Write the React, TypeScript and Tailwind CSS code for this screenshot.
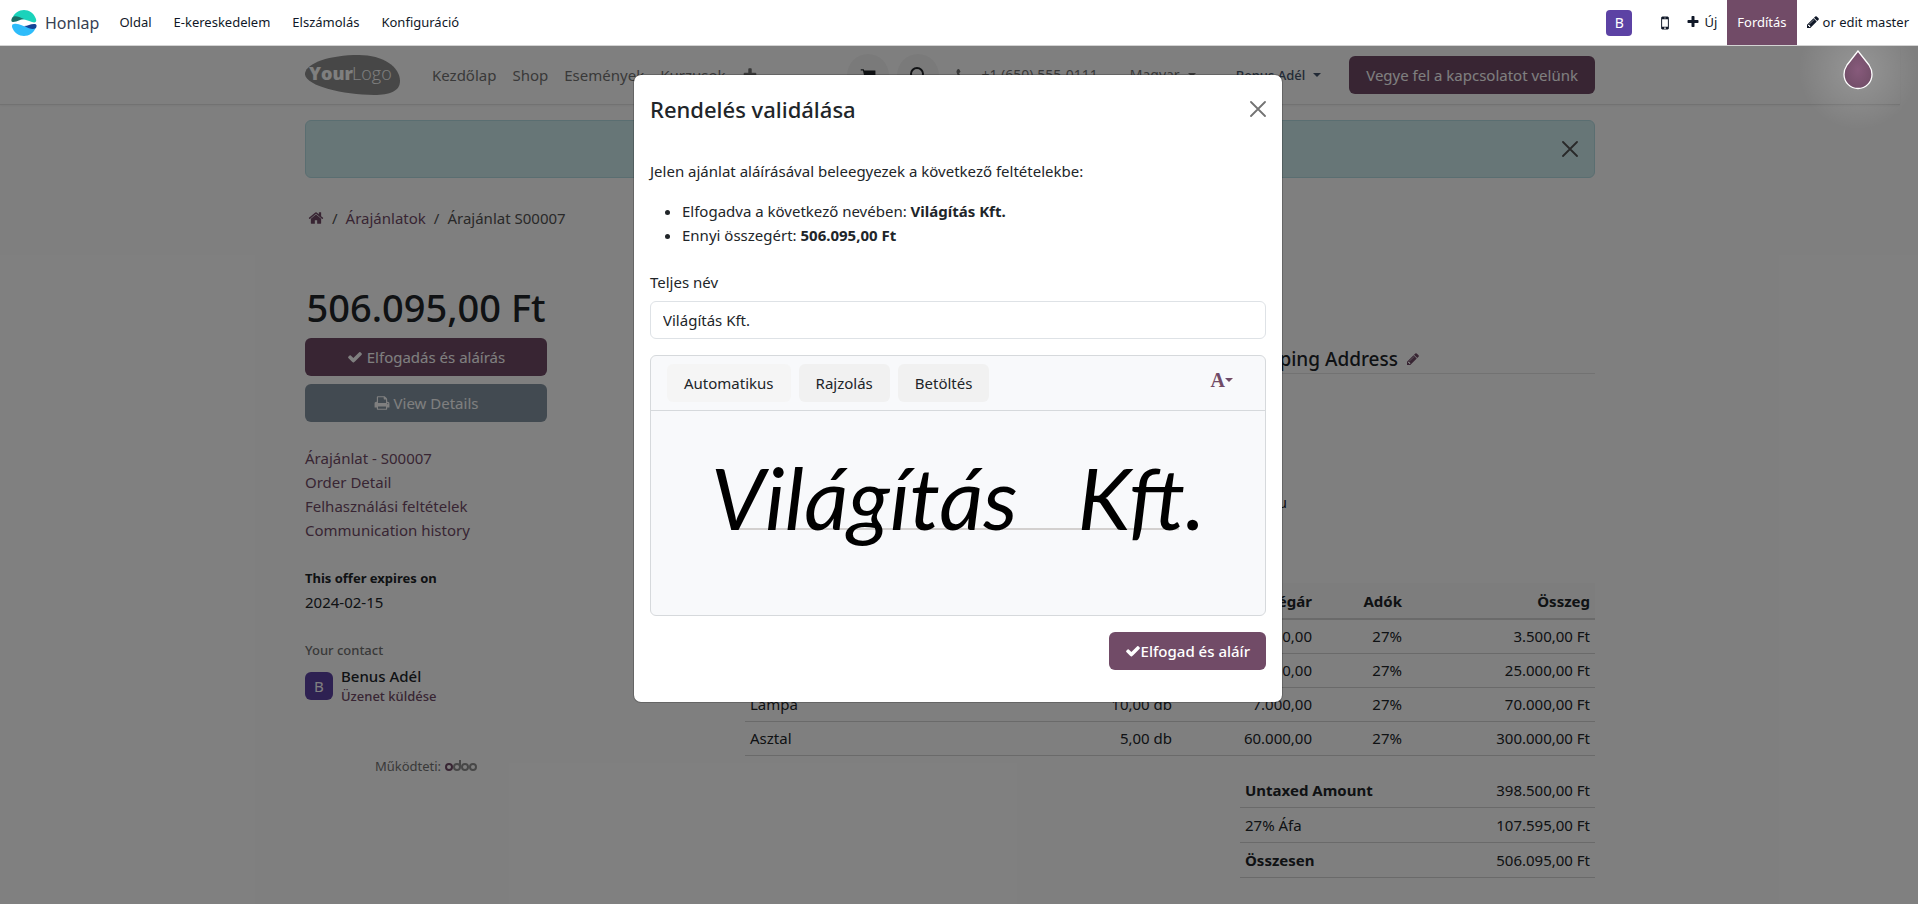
import React from 'react';

const ICONS = {
  check: 'M1671 566q0 40-28 68l-724 724-136 136q-28 28-68 28t-68-28l-136-136-362-362q-28-28-28-68t28-68l136-136q28-28 68-28t68 28l294 295 656-657q28-28 68-28t68 28l136 136q28 28 28 68z',
  pencil: 'M491 1536l91-91-235-235-91 91v107h128v128h107zm523-928q0-22-22-22-10 0-17 7l-542 542q-7 7-7 17 0 22 22 22 10 0 17-7l542-542q7-7 7-17zm-54-192l416 416-832 832h-416v-416zm683 96q0 53-37 90l-166 166-416-416 166-165q36-38 90-38 53 0 91 38l235 234q37 39 37 91z',
  plus: 'M1600 736v192q0 40-28 68t-68 28h-416v416q0 40-28 68t-68 28h-192q-40 0-68-28t-28-68v-416h-416q-40 0-68-28t-28-68v-192q0-40 28-68t68-28h416v-416q0-40 28-68t68-28h192q40 0 68 28t28 68v416h416q40 0 68 28t28 68z',
  print: 'M448 1536h896v-256h-896v256zm0-640h896v-384h-160q-40 0-68-28t-28-68v-160h-640v640zm1152 64q0-26-19-45t-45-19-45 19-19 45 19 45 45 19 45-19 19-45zm128 0v416q0 13-9.5 22.5t-22.5 9.5h-224v160q0 40-28 68t-68 28h-960q-40 0-68-28t-28-68v-160h-224q-13 0-22.5-9.5t-9.5-22.5v-416q0-79 56.5-135.5t135.5-56.5h64v-544q0-40 28-68t68-28h672q40 0 88 20t76 48l152 152q28 28 48 76t20 88v256h64q79 0 135.5 56.5t56.5 135.5z',
  home: 'M1472 992v480q0 26-19 45t-45 19h-384v-384h-256v384h-384q-26 0-45-19t-19-45v-480q0-1 .5-3t.5-3l575-474 575 474q1 2 1 6zm223-69l-62 74q-8 9-21 11h-3q-13 0-21-7l-692-577-692 577q-12 8-24 7-13-2-21-11l-62-74q-8-10-7-23.5t11-21.5l719-599q32-26 76-26t76 26l244 204v-195q0-14 9-23t23-9h192q14 0 23 9t9 23v408l219 182q10 8 11 21.5t-7 23.5z',
  mobile: 'M976 1408q0-33-23.5-56.5t-56.5-23.5-56.5 23.5-23.5 56.5 23.5 56.5 56.5 23.5 56.5-23.5 23.5-56.5zm208-160v-704q0-13-9.5-22.5t-22.5-9.5h-512q-13 0-22.5 9.5t-9.5 22.5v704q0 13 9.5 22.5t22.5 9.5h512q13 0 22.5-9.5t9.5-22.5zm-192-848q0-16-16-16h-160q-16 0-16 16t16 16h160q16 0 16-16zm288-16v1024q0 52-38 90t-90 38h-512q-52 0-90-38t-38-90v-1024q0-52 38-90t90-38h512q52 0 90 38t38 90z',
  cart: 'M704 1536q0 52-38 90t-90 38-90-38-38-90 38-90 90-38 90 38 38 90zm896 0q0 52-38 90t-90 38-90-38-38-90 38-90 90-38 90 38 38 90zm128-1088v512q0 24-16.500 42.500t-40.500 21.500l-1044 122q13 60 13 70 0 16-24 64h920q26 0 45 19t19 45-19 45-45 19h-1024q-26 0-45-19t-19-45q0-11 8-31.500t16-36 21.500-40 15.500-29.500l-177-823h-204q-26 0-45-19t-19-45 19-45 45-19h256q16 0 28.500 6.500t19.500 15.500 13 24.500 8 26 5.500 29.500 4.500 26h1201q26 0 45 19t19 45z',
  phone: 'M1600 1240q0 27-10 70.500t-21 68.500q-21 50-122 106-94 51-186 51-27 0-53-3.500t-57.500-12.500-47-14.500-55.500-20.500-49-18q-98-35-175-83-127-79-264-216t-216-264q-48-77-83-175-3-9-18-49t-20.500-55.500-14.500-47-12.500-57.500-3.500-53q0-92 51-186 56-101 106-122 25-11 68.500-21t70.500-10q14 0 21 3 18 6 53 76 11 19 30 54t35 63.500 31 53.500q3 4 17.500 25t21.500 35.500 7 28.500q0 20-28.500 50t-62 55-62 53-28.500 46q0 9 5 22.500t8.500 20.500 14 24 11.500 19q76 137 174 235t235 174q2 1 19 11.500t24 14 20.500 8.500 22.500 5q18 0 46-28.500t53-62 55-62 50-28.500q14 0 28.500 7t35.500 21.500 25 17.500q25 15 53.500 31t63.500 35 54 30q70 35 76 53 3 7 3 21z',
};

const Icon = ({ name, className = 'size-4' }: { name: keyof typeof ICONS; className?: string }) => (
  <svg viewBox="0 0 1792 1792" fill="currentColor" aria-hidden="true" className={`inline-block shrink-0 ${className}`}>
    <path d={ICONS[name]} />
  </svg>
);

const CloseIcon = () => (
  <svg viewBox="0 0 16 16" className="size-4" fill="none" stroke="currentColor" strokeWidth="1.8" strokeLinecap="round" aria-hidden="true">
    <path d="M1 1l14 14M15 1L1 15" />
  </svg>
);

const Caret = () => (
  <svg viewBox="0 0 8 4" className="h-1 w-2 shrink-0" fill="currentColor" aria-hidden="true">
    <path d="M0 0h8L4 4z" />
  </svg>
);

const ORDER_LINES = [
  ['Szék', '1,00 db', '3.500,00', '27%', '3.500,00 Ft'],
  ['Polc', '1,00 db', '25.000,00', '27%', '25.000,00 Ft'],
  ['Lámpa', '10,00 db', '7.000,00', '27%', '70.000,00 Ft'],
  ['Asztal', '5,00 db', '60.000,00', '27%', '300.000,00 Ft'],
];

const TOTALS = [
  { label: 'Untaxed Amount', value: '398.500,00 Ft', strong: true },
  { label: '27% Áfa', value: '107.595,00 Ft', strong: false },
  { label: 'Összesen', value: '506.095,00 Ft', strong: true },
];

const SystemBar = () => (
  <nav className="flex h-[46px] items-stretch justify-between border-b border-neutral-300 bg-white text-[13px] text-gray-900">
    <div className="flex items-center pl-[11px]">
      <svg viewBox="0 0 26 26" className="size-[26px]" aria-hidden="true">
        <path d="M1 9C3 3 8 0 13 0s10 3 12 9c1 3-1 4-4 3-5-2-9-3-13-3-3 0-5 1-7 0z" fill="#1ad3bb" />
        <path d="M1 8c2-3 6-2 12 1-4 0-6 3-11 3-2 0-2-2-1-4z" fill="#1a6f66" />
        <path d="M1 17c2 6 7 9 12 9s10-3 12-9c0-1-5 0-8 0-5 0-9-4-14-3-2 0-2 1-2 3z" fill="#2ebcfa" />
        <path d="M25 18c-3 2-6 1-12-2 4 0 6-2 10-2 3 0 3 2 2 4z" fill="#144496" />
      </svg>
      <a href="#" className="ml-2 text-base text-gray-700">Honlap</a>
      <div className="ml-5 flex gap-[22px] pb-0.5">
        <a href="#">Oldal</a>
        <a href="#">E-kereskedelem</a>
        <a href="#">Elszámolás</a>
        <a href="#">Konfiguráció</a>
      </div>
    </div>
    <div className="flex items-center">
      <span className="flex size-[26px] items-center justify-center rounded bg-[#5c42a4] text-sm text-white">B</span>
      <button aria-label="Mobil előnézet" className="ml-6 flex"><Icon name="mobile" className="size-[18px]" /></button>
      <button className="ml-3 flex items-center gap-1 pb-0.5"><Icon name="plus" className="size-3.5" />Új</button>
      <button className="ml-[10px] h-full bg-[#714b67] px-[10px] pb-0.5 text-white">Fordítás</button>
      <button className="flex items-center gap-[3px] pr-[9px] pb-0.5 pl-[9px]"><Icon name="pencil" className="size-3.5" />or edit master</button>
    </div>
  </nav>
);

const SiteHeader = () => (
  <header className="border-b border-neutral-200 shadow-xs">
    <div className="mx-auto flex h-[58px] max-w-[1320px] items-center px-[15px] text-neutral-500">
      <a href="#" aria-label="YourLogo">
        <svg viewBox="0 0 95 40" className="h-10 w-[95px]" aria-hidden="true">
          <path d="M0 18C2 8 24 0 54 0c24 0 41 12 41 26 0 10-10 14-26 14C36 40-2 30 0 18z" fill="#8f8f8f" />
          <text x="4" y="25" fontSize="18" fontWeight="800" fill="#fff" fontFamily="Open Sans, sans-serif">Your</text>
          <text x="47" y="25" fontSize="18" fontWeight="300" fill="#fff" fontFamily="Open Sans, sans-serif">Logo</text>
        </svg>
      </a>
      <div className="ml-8 flex items-center gap-4">
        <a href="#">Kezdőlap</a>
        <a href="#">Shop</a>
        <a href="#">Események</a>
        <a href="#">Kurzusok</a>
        <Icon name="plus" />
      </div>
      <div className="ml-auto flex items-center">
        <div className="flex gap-2 text-[#212529]">
          <button aria-label="Kosár" className="flex size-[42px] items-center justify-center rounded-full bg-neutral-100"><Icon name="cart" /></button>
          <button aria-label="Keresés" className="flex size-[42px] items-center justify-center rounded-full bg-neutral-100">
            <svg viewBox="0 0 16 16" className="size-4" fill="none" stroke="currentColor" strokeWidth="2" aria-hidden="true">
              <circle cx="7" cy="7" r="6" />
              <path d="M11 11l5 5" />
            </svg>
          </button>
        </div>
        <span className="ml-4 flex items-center gap-3 text-sm"><Icon name="phone" className="size-3.5" />+1 (650) 555-0111</span>
        <button className="ml-8 flex items-center gap-2 text-sm">Magyar<Caret /></button>
        <button className="ml-10 flex items-center gap-2 text-[13px] font-medium text-slate-600">Benus Adél<Caret /></button>
        <a href="#" className="ml-7 rounded-md bg-[#714b67] px-[17px] py-[7px] leading-6 text-white">Vegye fel a kapcsolatot velünk</a>
      </div>
    </div>
  </header>
);

const Sidebar = () => (
  <aside className="w-[242px] shrink-0">
    <h2 className="text-center text-[38px] leading-[48px] font-medium whitespace-nowrap">506.095,00 Ft</h2>
    <div className="mt-[7px] flex flex-col gap-2 text-white">
      <button className="flex h-[38px] items-center justify-center gap-1 rounded-md bg-[#714b67]"><Icon name="check" />Elfogadás és aláírás</button>
      <button className="flex h-[38px] items-center justify-center gap-1 rounded-md bg-[#8595a2]"><Icon name="print" />View Details</button>
    </div>
    <nav className="mt-6 flex flex-col text-[#714b67]">
      <a href="#">Árajánlat - S00007</a>
      <a href="#">Order Detail</a>
      <a href="#">Felhasználási feltételek</a>
      <a href="#">Communication history</a>
    </nav>
    <div className="mt-6">
      <p className="text-[13px] font-bold">This offer expires on</p>
      <p>2024-02-15</p>
    </div>
    <div className="mt-6">
      <p className="text-[13px] font-medium text-neutral-500">Your contact</p>
      <div className="mt-1 flex items-center gap-2">
        <span className="flex size-7 items-center justify-center rounded-md bg-[#5c42a4] text-white">B</span>
        <div className="leading-5">
          <p className="font-medium">Benus Adél</p>
          <a href="#" className="block text-[13px] font-medium text-[#714b67]">Üzenet küldése</a>
        </div>
      </div>
    </div>
    <p className="mt-12 flex items-center justify-center gap-1 text-[13px] text-neutral-500">
      Működteti:
      <svg viewBox="0 0 32 12" className="h-3 w-8" fill="none" stroke="#8f8f8f" strokeWidth="2" role="img" aria-label="odoo">
        <circle cx="4" cy="7" r="3" stroke="#714b67" />
        <circle cx="12" cy="7" r="3" />
        <path d="M15 0v7" />
        <circle cx="20" cy="7" r="3" />
        <circle cx="28" cy="7" r="3" />
      </svg>
    </p>
  </aside>
);

const OrderDetails = () => (
  <section className="ml-[198px] flex-1 pt-[62px]">
    <div className="ml-[410px] border-b border-neutral-200 text-right">
      <h4 className="mr-[175px] flex items-center justify-end gap-2 text-[19px] leading-7 font-medium whitespace-nowrap">
        Shipping Address <a href="#" aria-label="Szerkesztés" className="flex text-[#714b67]"><Icon name="pencil" className="size-3.5" /></a>
      </h4>
    </div>
    <p className="mt-[116px] mr-[308px] text-right">info@vilagitaskft.hu</p>
    <table className="mt-[69px] w-full table-fixed">
      <colgroup>
        <col />
        <col className="w-[130px]" />
        <col className="w-[140px]" />
        <col className="w-[90px]" />
        <col className="w-[188px]" />
      </colgroup>
      <thead>
        <tr className="h-[36px] border-b-2 border-neutral-300 bg-neutral-50">
          <th className="px-[5px] text-left">Termékek</th>
          <th className="px-[5px] text-right">Mennyiség</th>
          <th className="px-[5px] text-right">Egységár</th>
          <th className="px-[5px] text-right">Adók</th>
          <th className="px-[5px] text-right">Összeg</th>
        </tr>
      </thead>
      <tbody>
        {ORDER_LINES.map(([product, ...cells]) => (
          <tr key={product} className="h-[34px] border-b border-neutral-300">
            <td className="px-[5px] py-1">{product}</td>
            {cells.map((cell, i) => (
              <td key={i} className="px-[5px] text-right">{cell}</td>
            ))}
          </tr>
        ))}
      </tbody>
    </table>
    <table className="mt-[17px] ml-auto w-[355px]">
      <tbody>
        {TOTALS.map((row) => (
          <tr key={row.label} className="border-b border-neutral-300">
            <th className={row.strong ? 'px-[5px] py-[5px] text-left font-bold' : 'px-[5px] py-[5px] text-left font-normal'}>{row.label}</th>
            <td className="px-[5px] text-right">{row.value}</td>
          </tr>
        ))}
      </tbody>
    </table>
  </section>
);

const SignDialog = () => (
  <div role="dialog" aria-labelledby="sign-title" className="mt-7 w-full max-w-[650px] rounded-lg border border-black/20 bg-white bg-clip-padding p-4">
    <div className="flex items-center justify-between">
      <h5 id="sign-title" className="text-[22px] leading-9 font-medium">Rendelés validálása</h5>
      <button aria-label="Bezárás" className="text-neutral-500"><CloseIcon /></button>
    </div>
    <p className="mt-8">Jelen ajánlat aláírásával beleegyezek a következő feltételekbe:</p>
    <ul className="mt-4 list-disc pl-8">
      <li>Elfogadva a következő nevében: <b>Világítás Kft.</b></li>
      <li>Ennyi összegért: <b>506.095,00 Ft</b></li>
    </ul>
    <label htmlFor="full-name" className="mt-[23px] block">Teljes név</label>
    <input id="full-name" defaultValue="Világítás Kft." className="mt-[7px] h-[38px] w-full rounded-md border border-[#dee2e6] px-3" />
    <div className="mt-4 overflow-hidden rounded-md border border-[#d6d9dc] bg-[#f8f9fb]">
      <div className="flex h-[55px] items-center gap-2 border-b border-[#d6d9dc] px-4">
        <button className="h-[38px] rounded-md bg-[#f5f5f5] px-[17px]">Automatikus</button>
        <button className="h-[38px] rounded-md bg-[#f1f1f1] px-[17px]">Rajzolás</button>
        <button className="h-[38px] rounded-md bg-[#f1f1f1] px-[17px]">Betöltés</button>
        <button aria-label="Betűtípus" className="mr-4 mb-1.5 ml-auto flex items-center text-[#714b67]">
          <span className="font-['Liberation_Serif',serif] text-xl font-bold">A</span>
          <Caret />
        </button>
      </div>
      <div className="relative h-[204px]">
        <div className="absolute inset-x-[86px] top-[117px] h-0.5 bg-[#d3d0cf]" />
        <p className="relative flex justify-center gap-[60px] pt-[22px] font-[Lato,sans-serif] text-[86px] leading-[128px] whitespace-nowrap text-black italic">
          <span>Világítás</span>
          <span>Kft.</span>
        </p>
      </div>
    </div>
    <div className="mt-4 mb-4 flex justify-end">
      <button className="flex h-[38px] items-center rounded-md bg-[#714b67] px-4 font-medium text-white"><Icon name="check" />Elfogad és aláír</button>
    </div>
  </div>
);

export default function App() {
  return (
    <div className="flex min-h-screen flex-col overflow-hidden bg-white font-['Noto_Sans',sans-serif] text-[15px] leading-6 text-[#212529]">
      <SystemBar />
      <div className="relative flex-1">
        <div className="pr-[18px]">
          <SiteHeader />
          <main className="mx-auto max-w-[1320px] px-[15px]">
            <div className="mt-[15px] flex h-[58px] items-center justify-end rounded-md border border-[#b4dde2] bg-[#cfecef] px-4">
              <button aria-label="Bezárás" className="text-neutral-600"><CloseIcon /></button>
            </div>
            <nav className="mt-7 flex items-center gap-2 pl-[3px]">
              <a href="#" aria-label="Kezdőlap" className="flex text-[#714b67]"><Icon name="home" /></a>
              <span className="text-neutral-600">/</span>
              <a href="#" className="text-[#714b67]">Árajánlatok</a>
              <span className="text-neutral-600">/</span>
              <span className="text-neutral-600">Árajánlat S00007</span>
            </nav>
            <div className="mt-[53px] flex">
              <Sidebar />
              <OrderDetails />
            </div>
          </main>
        </div>
        <div className="absolute inset-0 flex items-start justify-center bg-black/50 pr-0.5">
          <SignDialog />
        </div>
        <div className="absolute -top-9 right-0 flex size-[120px] items-center justify-center bg-[radial-gradient(circle,rgba(255,255,255,0.18),transparent_70%)] [clip-path:inset(36px_0_0_0)]">
          <svg viewBox="0 0 30 40" className="h-10 w-[30px]" aria-hidden="true">
            <defs>
              <radialGradient id="drop">
                <stop offset="0" stopColor="#875a7b" />
                <stop offset="1" stopColor="#744f6a" />
              </radialGradient>
            </defs>
            <path d="M15 1L4 15C2 18 1 21 1 24.500a14 14 0 0 0 28 0C29 21 28 18 26 15z" fill="url(#drop)" stroke="#fff" strokeWidth="1.300" />
          </svg>
        </div>
      </div>
    </div>
  );
}
